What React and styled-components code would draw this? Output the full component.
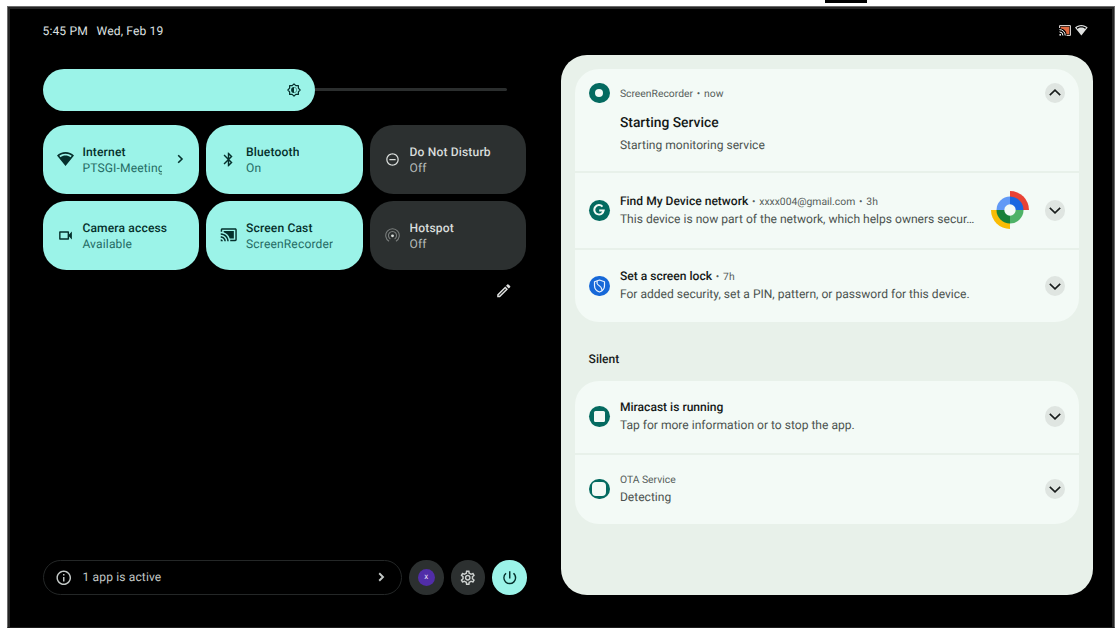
import React from 'react'
import styled, { createGlobalStyle, css } from 'styled-components'
import {
  MdBluetooth,
  MdCastConnected,
  MdInfoOutline,
  MdOutlineEdit,
  MdOutlineRemoveCircleOutline,
  MdOutlineSettings,
  MdOutlineVideocam,
  MdPowerSettingsNew,
} from 'react-icons/md'

const GlobalStyle = createGlobalStyle`
*{
    box-sizing: border-box;
    margin: 0;
    padding: 0;
}

body{
    background-color: #ffffff;
    font-family: Roboto, sans-serif;
    font-size: 12.07px;
    text-rendering: geometricPrecision;
    overflow: hidden;
}

svg{
    display: block;
    flex-shrink: 0;
}
`

const Page = styled.div`
width: 1118px;
height: 628px;
padding: 6px 3px 0 7px;
position: relative;
overflow: hidden;
`

const Notch = styled.div`
position: absolute;
top: 0;
left: 825px;
width: 42px;
height: 3px;
background-color: #000000;
`

const Screen = styled.div`
width: 1108px;
height: 622px;
padding: 13px 18.7px 32.5px 32.5px;
border: 1px solid #6b6b6b;
border-bottom-color: #1c1c1c;
box-shadow: inset 2px 2px 0 #242424, inset -2px 0 0 #242424;
background-color: #000000;

display: flex;
flex-direction: column;
`

const StatusBar = styled.header`
height: 21px;
padding: 0 7.7px 0 2px;

display: flex;
align-items: center;

color: #dfe1e0;
letter-spacing: 0.13px;
`

const Clock = styled.span`
margin-right: 8.8px;
`

const StatusIcons = styled.div`
margin-left: auto;

display: flex;
align-items: center;
gap: 3.7px;
`

const Content = styled.div`
flex: 1;
padding: 14px 2px 0 2px;
min-height: 0;

display: flex;
justify-content: space-between;
`

const Left = styled.section`
width: 484px;
padding-top: 14px;

display: flex;
flex-direction: column;
`

const Slider = styled.div`
height: 41.5px;
margin-bottom: 14px;

display: flex;
align-items: center;
`

const SliderFill = styled.div`
width: 272.5px;
height: 100%;
padding-right: 14px;
border-radius: 21px;
background-color: #9bf3e8;
color: #05302c;

display: flex;
align-items: center;
justify-content: flex-end;
`

const SliderTrack = styled.div`
width: 192px;
height: 3.4px;
border-radius: 0 2px 2px 0;
background-color: #2b2e2e;
`

const Tiles = styled.div`
display: grid;
grid-template-columns: repeat(3, 156.6px);
grid-auto-rows: 69px;
gap: 7px;
`

const TileBox = styled.div`
padding: 1px 14px;
border-radius: 23.5px;
letter-spacing: 0.15px;
line-height: 16px;

display: flex;
align-items: center;

${props => props.$on ? css`
background-color: #9bf3e8;
color: #05302c;
` : css`
background-color: #2c3030;
color: #d9dddb;
`}
`

const TileIcon = styled.div`
width: 17.5px;
margin-right: 8.4px;

display: flex;
justify-content: center;
`

const TileText = styled.div`
width: ${props => props.$clipped ? '79.5px' : 'auto'};
padding-top: 2.4px;
overflow: hidden;
white-space: nowrap;
`

const TileTitle = styled.div`
font-weight: 500;
`

const TileState = styled.div`
color: ${props => props.$on ? '#246b64' : '#b6bbb9'};
`

const TileArrow = styled.div`
margin-left: auto;
margin-right: 1px;
`

const EditRow = styled.div`
padding: 12.5px 14px 0 0;
color: #dfe1e0;

display: flex;
justify-content: flex-end;
`

const FooterRow = styled.footer`
margin-top: auto;
height: 34.5px;

display: flex;
gap: 7px;
`

const ActivePill = styled.div`
flex: 1;
padding: 0 16px 0 11.5px;
border: 1px solid #242727;
border-radius: 18px;
color: #c3c8c6;
letter-spacing: 0.13px;

display: flex;
align-items: center;
`

const PillText = styled.span`
flex: 1;
margin-left: 10px;
`

const RoundButton = styled.div`
width: 34.5px;
height: 34.5px;
border-radius: 50%;
background-color: ${props => props.$accent ? '#9bf3e8' : '#2c3030'};
color: ${props => props.$accent ? '#05302c' : '#cdd1cf'};

display: flex;
align-items: center;
justify-content: center;
`

const Avatar = styled.div`
width: 17.5px;
height: 17.5px;
border-radius: 50%;
background-color: #512da8;
color: #e6dff5;
font-size: 8px;
line-height: 16px;
text-align: center;
`

const Shade = styled.section`
width: 532.5px;
padding: 14px 14px 0;
border-radius: 26px;
background-color: #e8f1ea;
`

const Card = styled.div`
border-radius: 24px;
overflow: hidden;

display: flex;
flex-direction: column;
gap: 2px;
`

const Row = styled.article`
height: ${props => props.$height}px;
padding: 0 14px;
background-color: #f3faf6;

display: flex;
align-items: ${props => props.$expanded ? 'flex-start' : 'center'};
${props => props.$expanded && 'padding-top: 13.5px;'}
`

const AppIcon = styled.div`
width: 20.8px;
height: 20.8px;
margin-right: 10.3px;
flex-shrink: 0;
border-radius: 50%;
background-color: ${props => props.$color || '#046a60'};

display: flex;
align-items: center;
justify-content: center;
`

const RecordDot = styled.div`
width: 8px;
height: 8px;
border-radius: 50%;
background-color: #f3faf6;
`

const Square = styled.div`
width: ${props => props.$size}px;
height: ${props => props.$size}px;
border-radius: ${props => props.$radius}px;
background-color: #f3faf6;
`

const Body = styled.div`
flex: 1;
min-width: 0;
padding-bottom: ${props => props.$bottom || 1.4}px;
line-height: 18px;
white-space: nowrap;
color: #4b524f;
`

const Heading = styled.div`
display: flex;
align-items: baseline;
`

const Title = styled.span`
font-weight: 500;
color: #151918;
`

const Meta = styled.span`
font-size: 10.35px;
color: #565d5a;
line-height: ${props => props.$line || 16}px;
`

const Dot = styled(Meta)`
margin: 0 3.8px;
`

const BigTitle = styled.div`
margin-top: 9px;
font-size: 13.85px;
font-weight: 500;
line-height: 20px;
color: #151918;
`

const Message = styled.div`
margin-top: ${props => props.$top || 0}px;
`

const Expand = styled.div`
width: 20.8px;
height: 20.8px;
border-radius: 50%;
background-color: #dfe5e1;
color: #191d1c;

display: flex;
align-items: center;
justify-content: center;
`

const FindLogo = styled.svg`
margin: 0 15.5px 0 0;
`

const SectionTitle = styled.h2`
height: 58.5px;
padding: 0 13.8px;
font-size: 12.07px;
font-weight: 500;
line-height: 74px;
color: #191d1c;
`

const Arrow = ({ points, width, height, stroke = 1.6 }) => (
  <svg width={width} height={height} viewBox={`0 0 ${width} ${height}`} fill="none" stroke="currentColor" strokeWidth={stroke}>
    <polyline points={points} />
  </svg>
)

const ArrowRight = ({ stroke }) => <Arrow width={7} height={10} points="1.2,1.3 5,5 1.2,8.7" stroke={stroke} />
const ArrowDown = () => <Arrow width={12} height={8} points="0.8,1.9 6,6.9 11.2,1.9" />
const ArrowUp = () => <Arrow width={12} height={8} points="0.8,6.2 6,1.2 11.2,6.2" />

const Wifi = ({ width }) => (
  <svg width={width} height={width * 0.82} viewBox="0 0 24 19.6">
    <path fill="currentColor" fillRule="evenodd" d="M12 0C7.3 0 3.1 1.8 0 4.8L12 19.6 24 4.8C20.9 1.8 16.7 0 12 0zM12 2.4c3.4 0 6.4 1 8.8 2.9l-1.7 2C17.2 5.8 14.7 4.9 12 4.9S6.8 5.8 4.9 7.3l-1.7-2C5.6 3.4 8.6 2.4 12 2.4z" />
  </svg>
)

const Brightness = () => (
  <svg width="14" height="14" viewBox="0 0 24 24">
    <path fill="none" stroke="currentColor" strokeWidth="2.1" strokeLinejoin="round" d="M12 1.5l3.1 3h4.4v4.4l3 3.1-3 3.1v4.4h-4.4l-3.1 3-3.1-3H4.5v-4.4l-3-3.1 3-3.1V4.5h4.4z" />
    <path fill="currentColor" d="M12 7a5 5 0 0 0 0 10z" />
    <path fill="none" stroke="currentColor" strokeWidth="0.8" d="M12 7.3a4.7 4.7 0 0 1 0 9.4" />
  </svg>
)

const Tethering = () => (
  <svg width="15" height="15" viewBox="0 0 24 24" fill="none" stroke="currentColor" strokeWidth="1.7">
    <g opacity="0.45">
      <path d="M6.5 21.2a10.8 10.8 0 1 1 11 0" />
      <path d="M8.6 17.6a6.5 6.5 0 1 1 6.8 0" />
    </g>
    <circle cx="12" cy="12.5" r="2.3" fill="currentColor" stroke="none" />
  </svg>
)

const CastStatus = () => (
  <svg width="12" height="11" viewBox="0 0 12 11" fill="none">
    <path d="M0.6 3V0.6h10.8v9.8H7.5" stroke="#e8e3e0" strokeWidth="1" />
    <path d="M1.7 1.7h8.6v7.6H7.6A6.5 6.5 0 0 0 1.7 3.6z" fill="#e0683f" />
    <path d="M0.5 4.6a5.8 5.8 0 0 1 5.7 5.9M0.5 6.9a3.5 3.5 0 0 1 3.4 3.6" stroke="#ffffff" strokeWidth="1" />
    <circle cx="1.2" cy="9.8" r="0.9" fill="#ffffff" />
  </svg>
)

const GoogleG = () => (
  <svg width="12" height="12" viewBox="0 0 12 12" fill="none" stroke="#f3faf6" strokeWidth="2">
    <path d="M9.5 2.6A4.7 4.7 0 1 0 10.7 6.4H6.2" />
  </svg>
)

const Shield = () => (
  <svg width="13" height="14" viewBox="0 0 13 14" fill="none" stroke="#e9f2ff" strokeWidth="1.2" strokeLinejoin="round">
    <path d="M6.5 1L11.5 2.7V6.5C11.5 9.6 9.4 12 6.5 13C3.6 12 1.5 9.6 1.5 6.5V2.7z" />
    <path d="M4.1 2V4.5Q4.3 5.6 6.3 6.7T8.9 10.5V11.6" />
  </svg>
)

const FindDevice = () => (
  <FindLogo width="38" height="38" viewBox="-19 -19 38 38">
    <path fill="#e94335" d="M0-19A19 19 0 0 1 19 0H0z" />
    <path fill="#fabc05" d="M0 19A19 19 0 0 1-19 0H0z" />
    <path fill="#6199f6" d="M0 0H-13.5A13.5 13.5 0 0 1 0-13.5z" />
    <path fill="#1a67e0" d="M0 0V-13.5A13.5 13.5 0 0 1 13.5 0z" />
    <path fill="#4eb267" d="M0 0H13.5A13.5 13.5 0 0 1 0 13.5z" />
    <path fill="#188038" d="M0 0V13.5A13.5 13.5 0 0 1-13.5 0z" />
    <circle r="5.7" fill="#f3faf6" />
  </FindLogo>
)

const tiles = [
  { title: 'Internet', state: 'PTSGI-Meeting', on: true, icon: <Wifi width={17} />, arrow: true },
  { title: 'Bluetooth', state: 'On', on: true, icon: <MdBluetooth size={17} /> },
  { title: 'Do Not Disturb', state: 'Off', icon: <MdOutlineRemoveCircleOutline size={15} /> },
  { title: 'Camera access', state: 'Available', on: true, icon: <MdOutlineVideocam size={17} /> },
  { title: 'Screen Cast', state: 'ScreenRecorder', on: true, icon: <MdCastConnected size={17.5} /> },
  { title: 'Hotspot', state: 'Off', icon: <Tethering /> },
]

const Tile = ({ title, state, on, icon, arrow }) => (
  <TileBox $on={on}>
    <TileIcon>{icon}</TileIcon>
    <TileText $clipped={arrow}>
      <TileTitle>{title}</TileTitle>
      <TileState $on={on}>{state}</TileState>
    </TileText>
    {arrow && <TileArrow><ArrowRight /></TileArrow>}
  </TileBox>
)

const App = () => {
  return (
    <Page>
      <GlobalStyle />
      <Notch />
      <Screen>
        <StatusBar>
          <Clock>5:45 PM</Clock>
          <span>Wed, Feb 19</span>
          <StatusIcons>
            <CastStatus />
            <Wifi width={12.7} />
          </StatusIcons>
        </StatusBar>

        <Content>
          <Left>
            <Slider>
              <SliderFill><Brightness /></SliderFill>
              <SliderTrack />
            </Slider>
            <Tiles>
              {tiles.map(tile => <Tile key={tile.title} {...tile} />)}
            </Tiles>
            <EditRow><MdOutlineEdit size={17.5} /></EditRow>
            <FooterRow>
              <ActivePill>
                <MdInfoOutline size={17.5} />
                <PillText>1 app is active</PillText>
                <ArrowRight stroke={1.9} />
              </ActivePill>
              <RoundButton><Avatar>x</Avatar></RoundButton>
              <RoundButton><MdOutlineSettings size={17.5} /></RoundButton>
              <RoundButton $accent><MdPowerSettingsNew size={17.5} /></RoundButton>
            </FooterRow>
          </Left>

          <Shade>
            <Card>
              <Row $height={101.5} $expanded>
                <AppIcon><RecordDot /></AppIcon>
                <Body>
                  <Heading>
                    <Meta $line={21}>ScreenRecorder</Meta>
                    <Dot>•</Dot>
                    <Meta>now</Meta>
                  </Heading>
                  <BigTitle>Starting Service</BigTitle>
                  <Message $top={3.8}>Starting monitoring service</Message>
                </Body>
                <Expand><ArrowUp /></Expand>
              </Row>
              <Row $height={75.5}>
                <AppIcon><GoogleG /></AppIcon>
                <Body $bottom={0.8}>
                  <Heading>
                    <Title>Find My Device network</Title>
                    <Dot>•</Dot>
                    <Meta>xxxx004@gmail.com</Meta>
                    <Dot>•</Dot>
                    <Meta>3h</Meta>
                  </Heading>
                  <Message>This device is now part of the network, which helps owners secur…</Message>
                </Body>
                <FindDevice />
                <Expand><ArrowDown /></Expand>
              </Row>
              <Row $height={72}>
                <AppIcon $color="#1668d8"><Shield /></AppIcon>
                <Body>
                  <Heading>
                    <Title>Set a screen lock</Title>
                    <Dot>•</Dot>
                    <Meta>7h</Meta>
                  </Heading>
                  <Message>For added security, set a PIN, pattern, or password for this device.</Message>
                </Body>
                <Expand><ArrowDown /></Expand>
              </Row>
            </Card>

            <SectionTitle>Silent</SectionTitle>

            <Card>
              <Row $height={72}>
                <AppIcon><Square $size={11} $radius={1.5} /></AppIcon>
                <Body>
                  <Title>Miracast is running</Title>
                  <Message>Tap for more information or to stop the app.</Message>
                </Body>
                <Expand><ArrowDown /></Expand>
              </Row>
              <Row $height={69}>
                <AppIcon><Square $size={14.4} $radius={4} /></AppIcon>
                <Body $bottom={0.6}>
                  <Heading><Meta $line={16}>OTA Service</Meta></Heading>
                  <Message>Detecting</Message>
                </Body>
                <Expand><ArrowDown /></Expand>
              </Row>
            </Card>
          </Shade>
        </Content>
      </Screen>
    </Page>
  )
}

export default App
